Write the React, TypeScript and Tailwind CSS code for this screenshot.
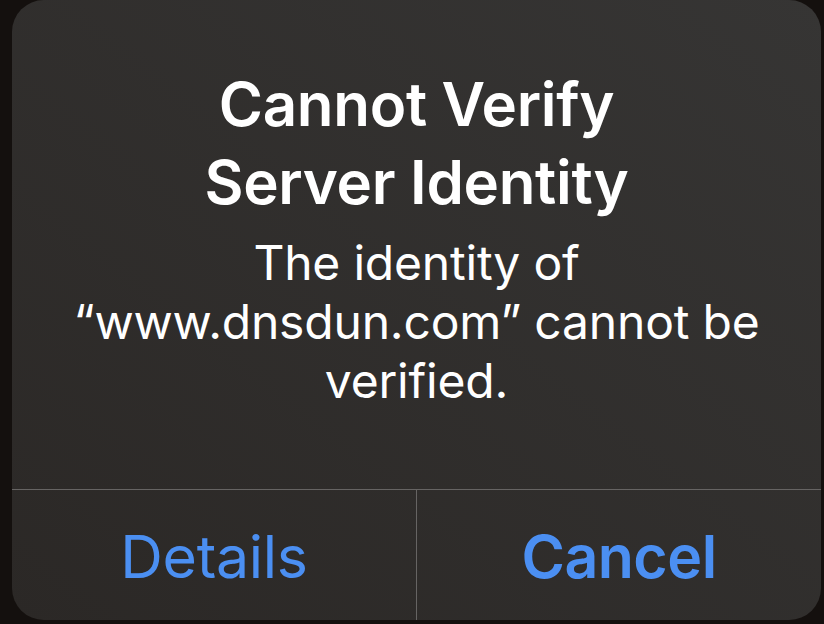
export default function App() {
  return (
    <div
      className="w-[824px] h-[624px] overflow-hidden bg-[#14100e] pl-[12px] pr-[3px] pb-[4px] flex"
      style={{ fontFamily: 'Inter, "Noto Sans", sans-serif' }}
    >
      <div className="flex-1 flex flex-col rounded-[32px] bg-gradient-to-tr from-[#2b2826] to-[#363534] text-white">
        <div className="flex flex-col items-center pt-[65px] pb-[79px] text-center">
          <div className="text-[60px] leading-[78px] font-semibold tracking-[-0.3px]">
            Cannot Verify
            <br />
            Server Identity
          </div>
          <div className="mt-[12px] text-[48px] leading-[59px] font-normal tracking-[-0.2px]">
            The identity of
            <br />
            “www.dnsdun.com” cannot be
            <br />
            verified.
          </div>
        </div>
        <div className="flex-1 flex border-t border-[#666463]">
          <div className="flex-1 flex items-center justify-center pt-[4px] text-[59px] text-[#4b8ff2] font-normal tracking-[-0.3px] border-r border-[#666463]">
            Details
          </div>
          <div className="flex-1 flex items-center justify-center pt-[4px] text-[59px] text-[#4b8ff2] font-semibold tracking-[-0.5px]">
            Cancel
          </div>
        </div>
      </div>
    </div>
  );
}
